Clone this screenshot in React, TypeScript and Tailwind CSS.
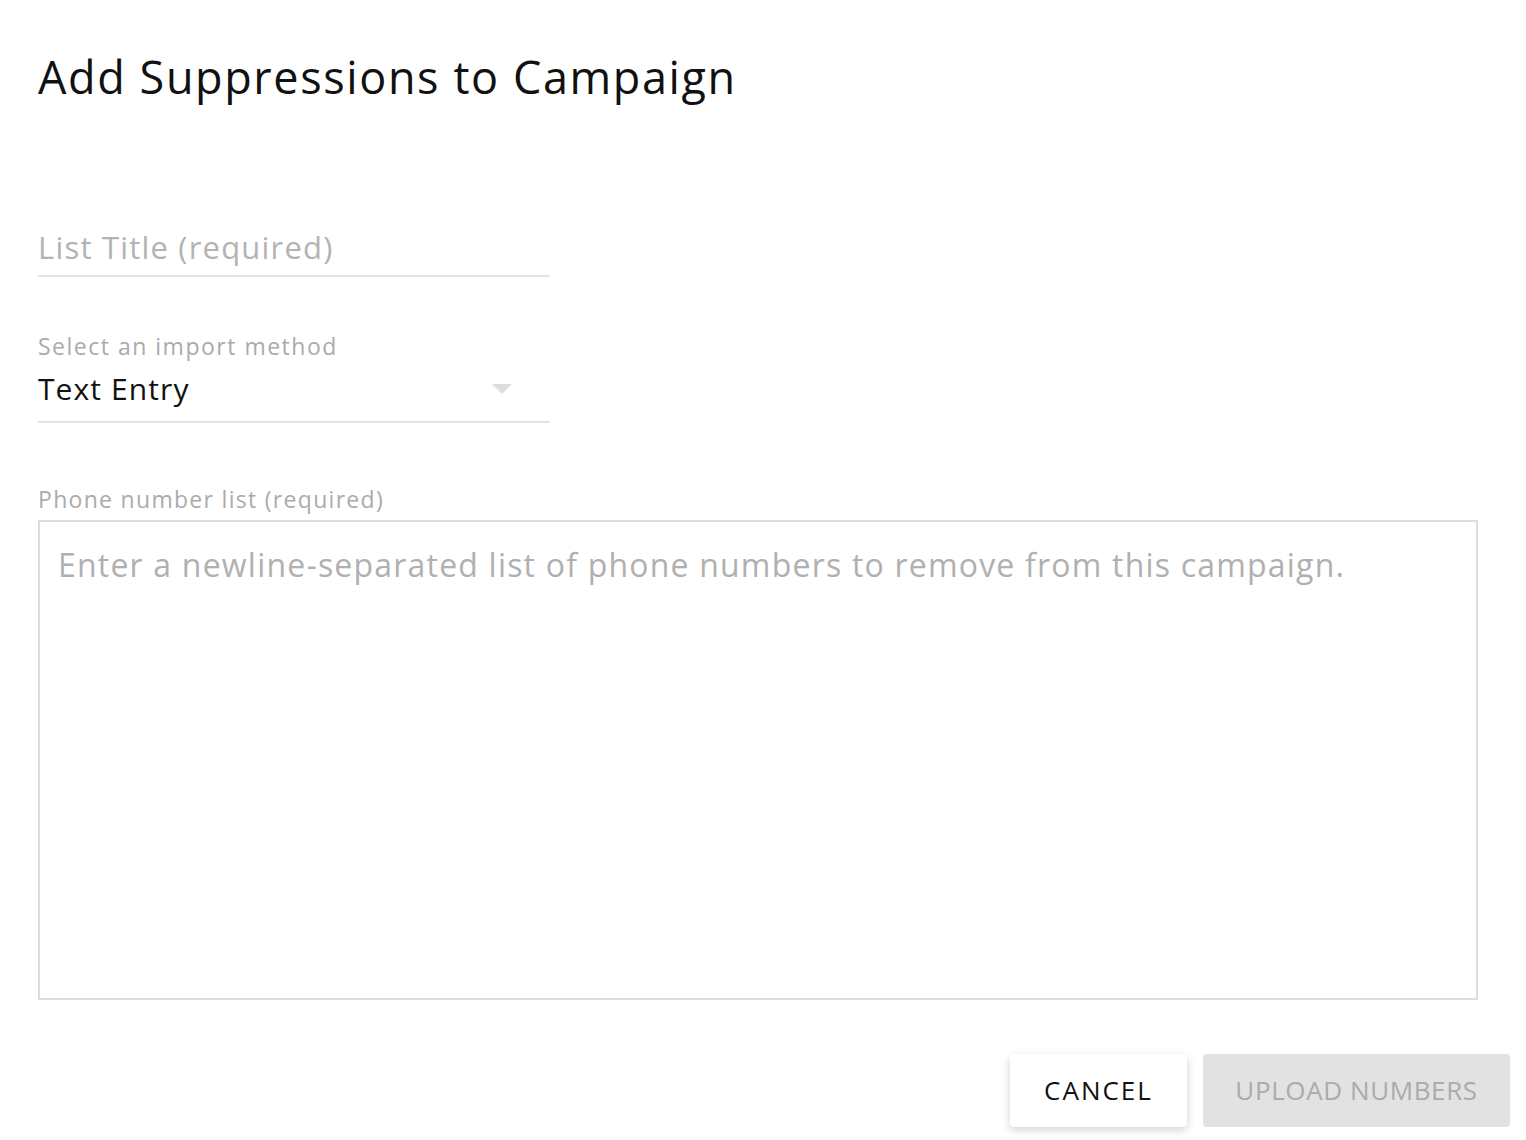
export default function App() {
  return (
    <div className="min-h-[1140px] w-[1526px] bg-white px-[38px] pt-[47px] text-black" style={{ fontFamily: '"Open Sans", "Noto Sans", sans-serif' }}>
      <h1 className="text-[45px] leading-[60px] font-normal tracking-[1.6px] text-[#111]">Add Suppressions to Campaign</h1>
      <div className="mt-[120px] w-[512px] border-b-2 border-[#e3e3e3] pb-[8px]">
        <div className="text-[31px] leading-[40px] tracking-[1.2px] text-[#b3b3b3]">List Title (required)</div>
      </div>
      <div className="mt-[54px] w-[512px]">
        <div className="text-[23px] leading-[30px] tracking-[1.5px] text-[#ababab]">Select an import method</div>
        <div className="flex items-center justify-between border-b-2 border-[#e3e3e3] pt-[6px] pb-[10px]">
          <div className="text-[30px] leading-[44px] tracking-[1.1px] text-[#111]">Text Entry</div>
          <svg width="20" height="10" viewBox="0 0 20 10" className="mr-[38px]"><path d="M0 0 L20 0 L10 10 Z" fill="#dddddd" /></svg>
        </div>
      </div>
      <div className="mt-[61px] text-[23px] leading-[30px] tracking-[1.3px] text-[#ababab]">Phone number list (required)</div>
      <div className="mt-[6px] h-[480px] w-[1440px] border-2 border-[#dddddd] px-[18px] pt-[22px]">
        <div className="text-[32px] leading-[42px] tracking-[1.2px] text-[#b0b0b0]">Enter a newline-separated list of phone numbers to remove from this campaign.</div>
      </div>
      <div className="mt-[54px] -mr-[22px] flex justify-end gap-[16px]">
        <button className="h-[73px] w-[177px] rounded-[4px] bg-white text-[26px] tracking-[2px] text-[#111] shadow-[0_3px_8px_rgba(0,0,0,0.18)]">CANCEL</button>
        <button className="h-[73px] w-[307px] rounded-[4px] bg-[#e2e2e2] text-[26px] tracking-[0.6px] text-[#ababab]">UPLOAD NUMBERS</button>
      </div>
    </div>
  );
}
